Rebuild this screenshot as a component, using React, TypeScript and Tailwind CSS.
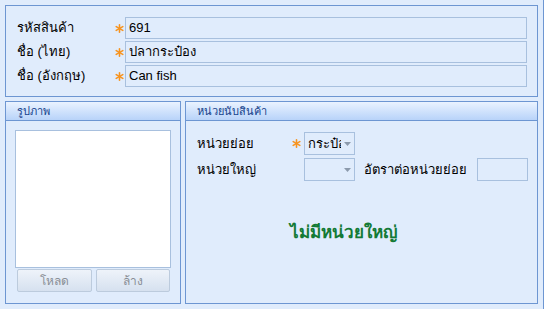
import React from 'react';

const FONT = { fontFamily: 'Tahoma, "Liberation Sans", "Noto Sans", sans-serif' };

// orange required-field mark
const Req = () => (
  <svg width="9" height="9" viewBox="0 0 9 9" className="shrink-0">
    <g stroke="#f7931e" strokeWidth="1.6" strokeLinecap="round">
      <line x1="4.5" y1="0.8" x2="4.5" y2="8.2" />
      <line x1="1.2" y1="2.6" x2="7.8" y2="6.4" />
      <line x1="1.2" y1="6.4" x2="7.8" y2="2.6" />
    </g>
  </svg>
);

const Arrow = () => (
  <svg width="7" height="4" viewBox="0 0 7 4">
    <path d="M0 0 H7 L3.5 4 Z" fill="#8c9aac" />
  </svg>
);

const FieldRow = ({ label, value }: { label: string; value: string }) => (
  <div className="flex items-center h-[22px]">
    <div className="w-[96px] text-[13px] text-black">{label}</div>
    <div className="w-[12px] flex justify-center">
      <Req />
    </div>
    <div className="flex-1 h-[22px] border border-[#a8c0de] bg-[#e0ecfc] flex items-center px-[3px] text-[13px] text-black">
      {value}
    </div>
  </div>
);

const PanelHeader = ({ title }: { title: string }) => (
  <div className="h-[19px] border-b border-[#6d96d2] bg-gradient-to-b from-[#eaf3ff] to-[#b8d3f9] flex items-center px-[11px] text-[11px] text-[#15428b]">
    {title}
  </div>
);

const Btn = ({ text }: { text: string }) => (
  <div className="h-[23px] flex-1 rounded-[2px] border border-[#bccbdd] bg-gradient-to-b from-[#eef3fa] to-[#d6e1ef] flex items-center justify-center text-[12px] text-[#8a8f96]">
    {text}
  </div>
);

const Combo = ({ value }: { value?: string }) => (
  <div className="w-[51px] h-[23px] border border-[#a8c0de] bg-[#e0ecfc] flex items-center">
    <div className="w-[36px] overflow-hidden whitespace-nowrap pl-[3px] text-[13px] text-black">{value}</div>
    <div className="flex-1 flex justify-center">
      <Arrow />
    </div>
  </div>
);

export default function App() {
  return (
    <div className="w-[544px] h-[309px] bg-[#e0ecfc] border-r border-[#6d96d2] p-[5px] flex flex-col gap-[4px]" style={FONT}>
      {/* product info */}
      <div className="h-[92px] border border-[#6d96d2] pt-[11px] pl-[11px] pr-[10px] flex flex-col gap-[2px]">
        <FieldRow label="รหัสสินค้า" value="691" />
        <FieldRow label="ชื่อ (ไทย)" value="ปลากระป๋อง" />
        <FieldRow label="ชื่อ (อังกฤษ)" value="Can fish" />
      </div>

      <div className="flex gap-[4px] h-[203px]">
        {/* picture */}
        <div className="w-[176px] border border-[#6d96d2] flex flex-col">
          <PanelHeader title="รูปภาพ" />
          <div className="flex flex-col px-[9px] pt-[9px]">
            <div className="h-[138px] bg-white border border-[#a8c0de]" />
            <div className="flex gap-[4px] px-[2px] pr-[1px] mt-[1px]">
              <Btn text="โหลด" />
              <Btn text="ล้าง" />
            </div>
          </div>
        </div>

        {/* units */}
        <div className="flex-1 border border-[#6d96d2] flex flex-col">
          <PanelHeader title="หน่วยนับสินค้า" />
          <div className="flex flex-col gap-[3px] pl-[11px] pt-[11px]">
            <div className="flex items-center">
              <div className="w-[92px] text-[13px] text-black">หน่วยย่อย</div>
              <div className="w-[15px] flex justify-center">
                <Req />
              </div>
              <Combo value="กระป๋อง" />
            </div>
            <div className="flex items-center">
              <div className="w-[107px] text-[13px] text-black">หน่วยใหญ่</div>
              <Combo />
              <div className="w-[122px] pl-[9px] text-[13px] text-black">อัตราต่อหน่วยย่อย</div>
              <div className="w-[51px] h-[23px] border border-[#a8c0de] bg-[#e0ecfc]" />
            </div>
          </div>
          <div className="pl-[104px] pt-[39px] text-[17px] font-bold text-[#137a35]">ไม่มีหน่วยใหญ่</div>
        </div>
      </div>
    </div>
  );
}
